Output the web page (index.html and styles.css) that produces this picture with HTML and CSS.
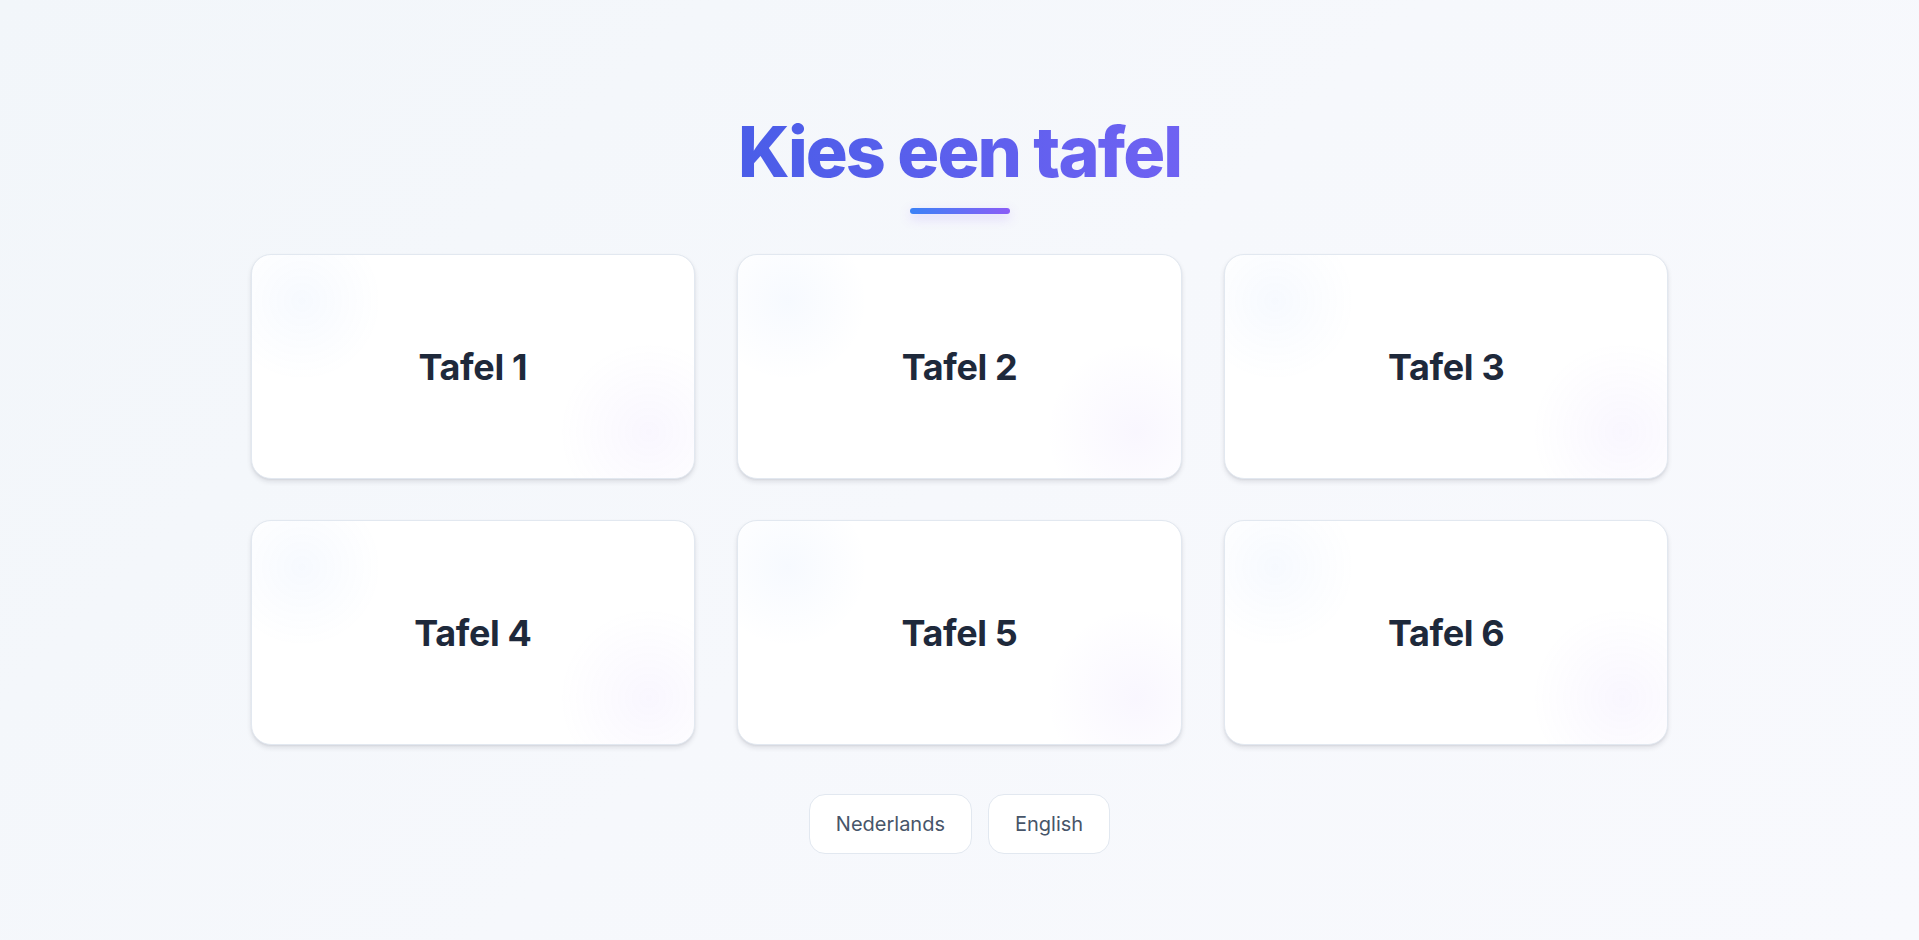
FILE: index.html
```html
<!DOCTYPE html>
<html lang="nl">
<head>
    <meta charset="UTF-8">
    <meta name="viewport" content="width=device-width, initial-scale=1.0">
    <title>Kies een tafel</title>
    <link rel="stylesheet" href="styles.css">
</head>
<body>
    <div class="page">
        <h1 class="title">Kies een tafel</h1>
        <div class="bar"></div>
        <div class="tables">
            <a href="#" class="table">Tafel 1</a>
            <a href="#" class="table">Tafel 2</a>
            <a href="#" class="table">Tafel 3</a>
            <a href="#" class="table">Tafel 4</a>
            <a href="#" class="table">Tafel 5</a>
            <a href="#" class="table">Tafel 6</a>
        </div>
        <div class="lang">
            <button class="lang-btn">Nederlands</button>
            <button class="lang-btn">English</button>
        </div>
    </div>
</body>
</html>
```

FILE: styles.css
```css
*{
    margin: 0;
    padding: 0;
    box-sizing: border-box;
}
a{
    text-decoration: none;
}
body{
    min-height: 100vh;
    font-family: Inter, "Noto Sans", sans-serif;
    background: linear-gradient(135deg, #f2f6fa 0%, #f6f8fc 50%, #f8f9fd 100%);
}
.page{
    padding-top: 110px;
    display: flex;
    flex-direction: column;
    align-items: center;
}
.title{
    font-size: 70px;
    line-height: 84px;
    font-weight: 800;
    letter-spacing: -0.028em;
    background: linear-gradient(90deg, #4a5de8, #6f62f2);
    -webkit-background-clip: text;
    background-clip: text;
    color: transparent;
}
.bar{
    width: 100px;
    height: 6px;
    margin-top: 14px;
    border-radius: 3px;
    background: linear-gradient(90deg, #3b82f6, #8b5cf6);
    box-shadow: 0 4px 12px rgba(139,92,246,0.25);
}
.tables{
    width: 1418px;
    margin-top: 40px;
    display: grid;
    grid-template-columns: repeat(3, 1fr);
    grid-auto-rows: 225px;
    column-gap: 42px;
    row-gap: 41px;
}
.table{
    display: flex;
    align-items: center;
    justify-content: center;
    border: 1px solid #e2e8f0;
    border-radius: 20px;
    background:
        radial-gradient(circle at 50px 46px, rgba(59,130,246,0.045), rgba(59,130,246,0) 80px),
        radial-gradient(circle at calc(100% - 45px) calc(100% - 46px), rgba(139,92,246,0.05), rgba(139,92,246,0) 90px),
        #fff;
    box-shadow: 0 3px 5px rgba(15,23,42,0.10), 0 1px 2px rgba(15,23,42,0.06);
    font-size: 36px;
    font-weight: 700;
    letter-spacing: -0.01em;
    color: #1e293b;
}
.lang{
    margin-top: 49px;
    display: flex;
    gap: 16px;
}
.lang-btn{
    font-family: Inter, "Noto Sans", sans-serif;
    font-size: 20px;
    line-height: 23px;
    padding: 18px 26px 17px;
    color: #475569;
    background: #fff;
    border: 1px solid #e2e8f0;
    border-radius: 16px;
    cursor: pointer;
}
```
